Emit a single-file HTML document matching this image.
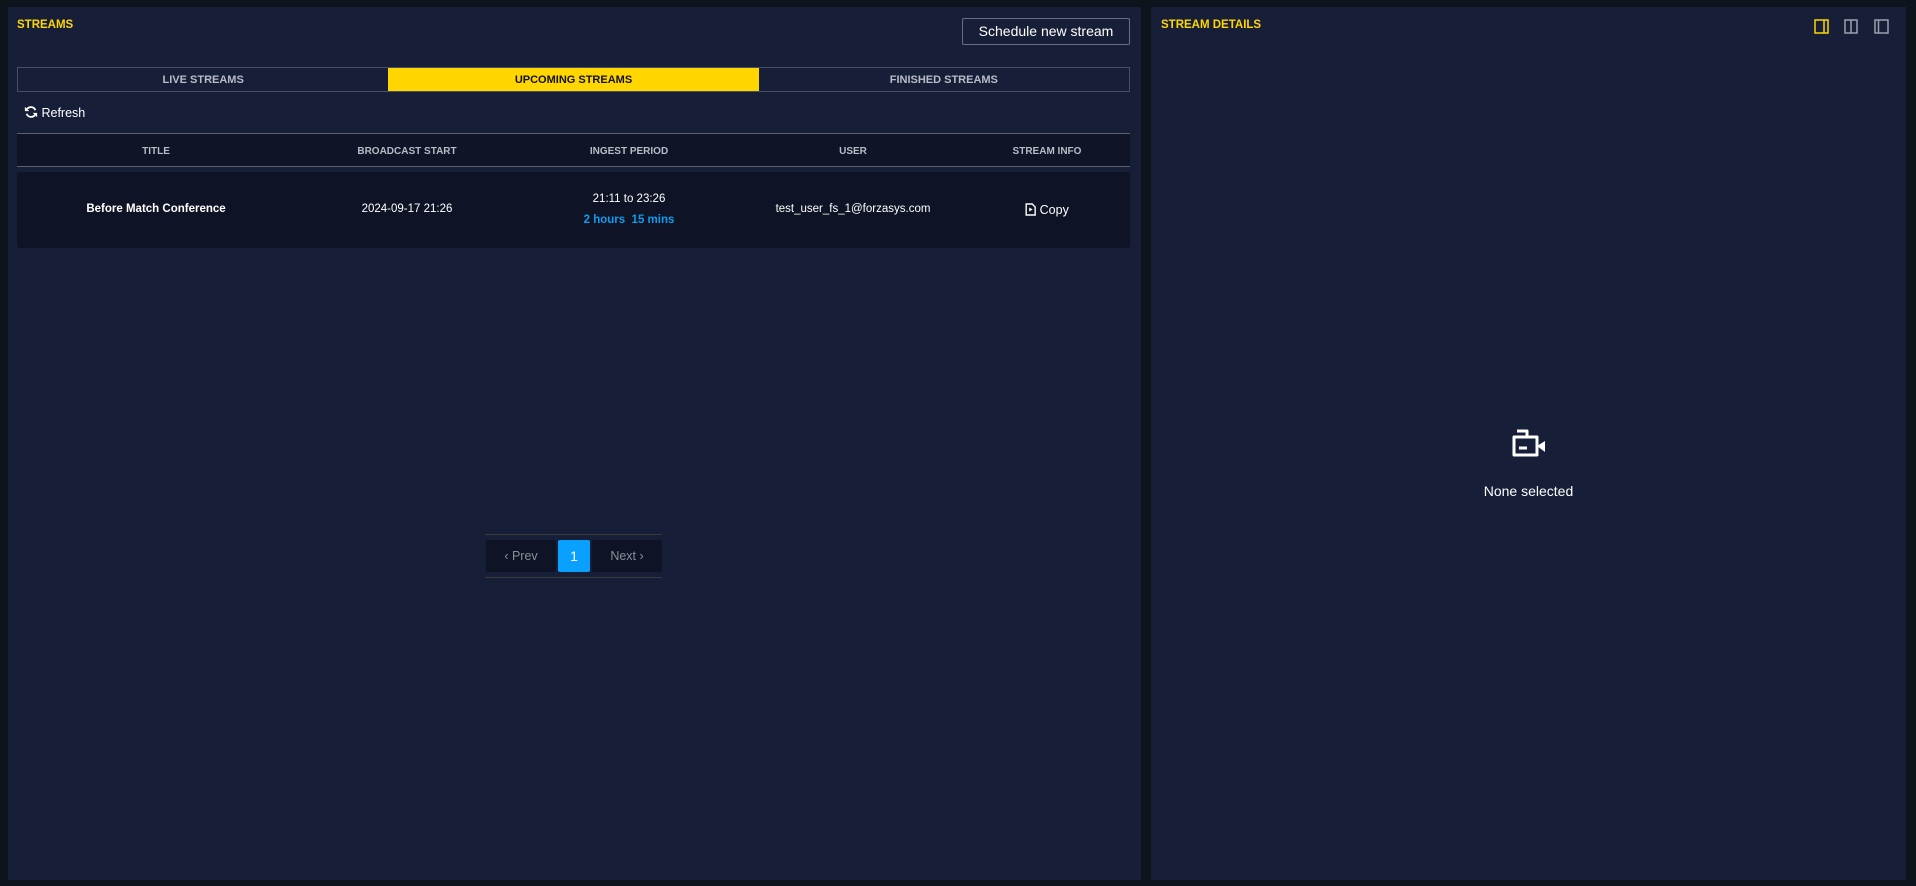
<!DOCTYPE html>
<html><head><meta charset="utf-8"><style>
*{box-sizing:border-box;margin:0;padding:0}
body{width:1916px;height:886px;background:#0d141c;font-family:"Liberation Sans",sans-serif;color:#fff;position:relative;overflow:hidden}
.p{position:absolute;background:#171f38}
.a{position:absolute}
.y{color:#ffd600;font-weight:bold;font-size:11.5px}
.tabs{left:17px;top:67px;width:1113px;height:25px;border:1px solid #4a5060;display:flex}
.tabs div{flex:1;text-align:center;font-size:11px;font-weight:bold;color:#b8bcc6;line-height:25px}
.tabs .on{background:#ffd600;color:#111}
.th{left:17px;top:133px;width:1113px;height:34px;background:#0f1526;border-top:1px solid #5a606e;border-bottom:1px solid #5a606e}
.c{position:absolute;transform:translateX(-50%);text-align:center;white-space:nowrap}
.th .c{top:12px;font-size:10px;font-weight:bold;color:#b8bcc6}
.row{left:17px;top:172px;width:1113px;height:76px;background:#0e1425;border-radius:3px}
.row .c{font-size:11.5px}
</style></head><body>
<div class="p" style="left:8px;top:7px;width:1133px;height:873px">
<div class="a y" style="left:9px;top:12px">STREAMS</div>
<div class="a" style="left:954px;top:11px;width:168px;height:27px;border:1px solid #6a7080;border-radius:2px;font-size:14px;text-align:center;line-height:25px">Schedule new stream</div>
</div>
<div class="a tabs"><div>LIVE STREAMS</div><div class="on">UPCOMING STREAMS</div><div>FINISHED STREAMS</div></div>
<div class="a" style="left:24px;top:105px;font-size:12.5px">
<svg width="14" height="14" viewBox="0 0 16 16" style="vertical-align:-2px"><path d="M13 6A5.5 5.5 0 0 0 3.5 4.5M3 10a5.5 5.5 0 0 0 9.5 1.5" stroke="#fff" stroke-width="2" fill="none"/><path d="M1 2v5h5zM15 14V9h-5z" fill="#fff"/></svg> Refresh</div>
<div class="a th">
<div class="c" style="left:139px">TITLE</div><div class="c" style="left:390px">BROADCAST START</div><div class="c" style="left:612px">INGEST PERIOD</div><div class="c" style="left:836px">USER</div><div class="c" style="left:1030px">STREAM INFO</div>
</div>
<div class="a row">
<div class="c" style="left:139px;top:31px;font-weight:bold">Before Match Conference</div>
<div class="c" style="left:390px;top:31px">2024-09-17 21:26</div>
<div class="c" style="left:612px;top:21px">21:11 to 23:26</div>
<div class="c" style="left:612px;top:42px;color:#109cf0;font-weight:bold">2 hours&nbsp; 15 mins</div>
<div class="c" style="left:836px;top:31px">test_user_fs_1@forzasys.com</div>
<div class="c" style="left:1030px;top:31px;font-size:12.5px"><svg width="11" height="13" viewBox="0 0 11 13" style="vertical-align:-2px"><path d="M1 1h6l3 3v8H1z" stroke="#fff" stroke-width="1.4" fill="none"/><path d="M4 4.5v4l3.5-2z" fill="#fff"/></svg> Copy</div>
</div>
<div class="a" style="left:485px;top:534px;width:177px;height:44px;border-top:1px solid #3a3a3a;border-bottom:1px solid #3a3a3a"></div>
<div class="a" style="left:486px;top:540px;width:70px;height:32px;background:#0e1425;border-radius:2px;color:#8a8e98;font-size:12.5px;text-align:center;line-height:32px">‹ Prev</div>
<div class="a" style="left:558px;top:540px;width:32px;height:32px;background:#0aa0ff;border-radius:2px;font-size:14px;text-align:center;line-height:32px">1</div>
<div class="a" style="left:592px;top:540px;width:70px;height:32px;background:#0e1425;border-radius:2px;color:#8a8e98;font-size:12.5px;text-align:center;line-height:32px">Next ›</div>

<div class="p" style="left:1151px;top:7px;width:755px;height:873px">
<div class="a y" style="left:10px;top:12px">STREAM DETAILS</div>
<svg class="a" style="left:663px;top:12px" width="15" height="15" viewBox="0 0 15 15"><rect x="1" y="1" width="13" height="13" fill="none" stroke="#ffd600" stroke-width="1.5"/><line x1="10" y1="1" x2="10" y2="14" stroke="#ffd600" stroke-width="1.5"/></svg>
<svg class="a" style="left:693px;top:12px" width="15" height="15" viewBox="0 0 15 15"><rect x="1" y="1" width="12" height="13" fill="none" stroke="#9aa0ac" stroke-width="1.5"/><line x1="7" y1="1" x2="7" y2="14" stroke="#9aa0ac" stroke-width="1.5"/></svg>
<svg class="a" style="left:723px;top:12px" width="15" height="15" viewBox="0 0 15 15"><rect x="1" y="1" width="13" height="13" fill="none" stroke="#9aa0ac" stroke-width="1.5"/><line x1="4.5" y1="1" x2="4.5" y2="14" stroke="#9aa0ac" stroke-width="1.5"/></svg>
<svg class="a" style="left:358px;top:422px" width="40" height="36" viewBox="0 0 40 36"><path d="M8 2h10v6M5 8h23v18H5z" stroke="#fff" stroke-width="3" fill="none" stroke-linejoin="round"/><path d="M28 17l8-5v11z" fill="#fff"/><line x1="10" y1="19" x2="18" y2="19" stroke="#fff" stroke-width="3"/></svg>
<div class="a" style="left:0;width:755px;top:476px;text-align:center;font-size:14px">None selected</div>
</div>
</body></html>
